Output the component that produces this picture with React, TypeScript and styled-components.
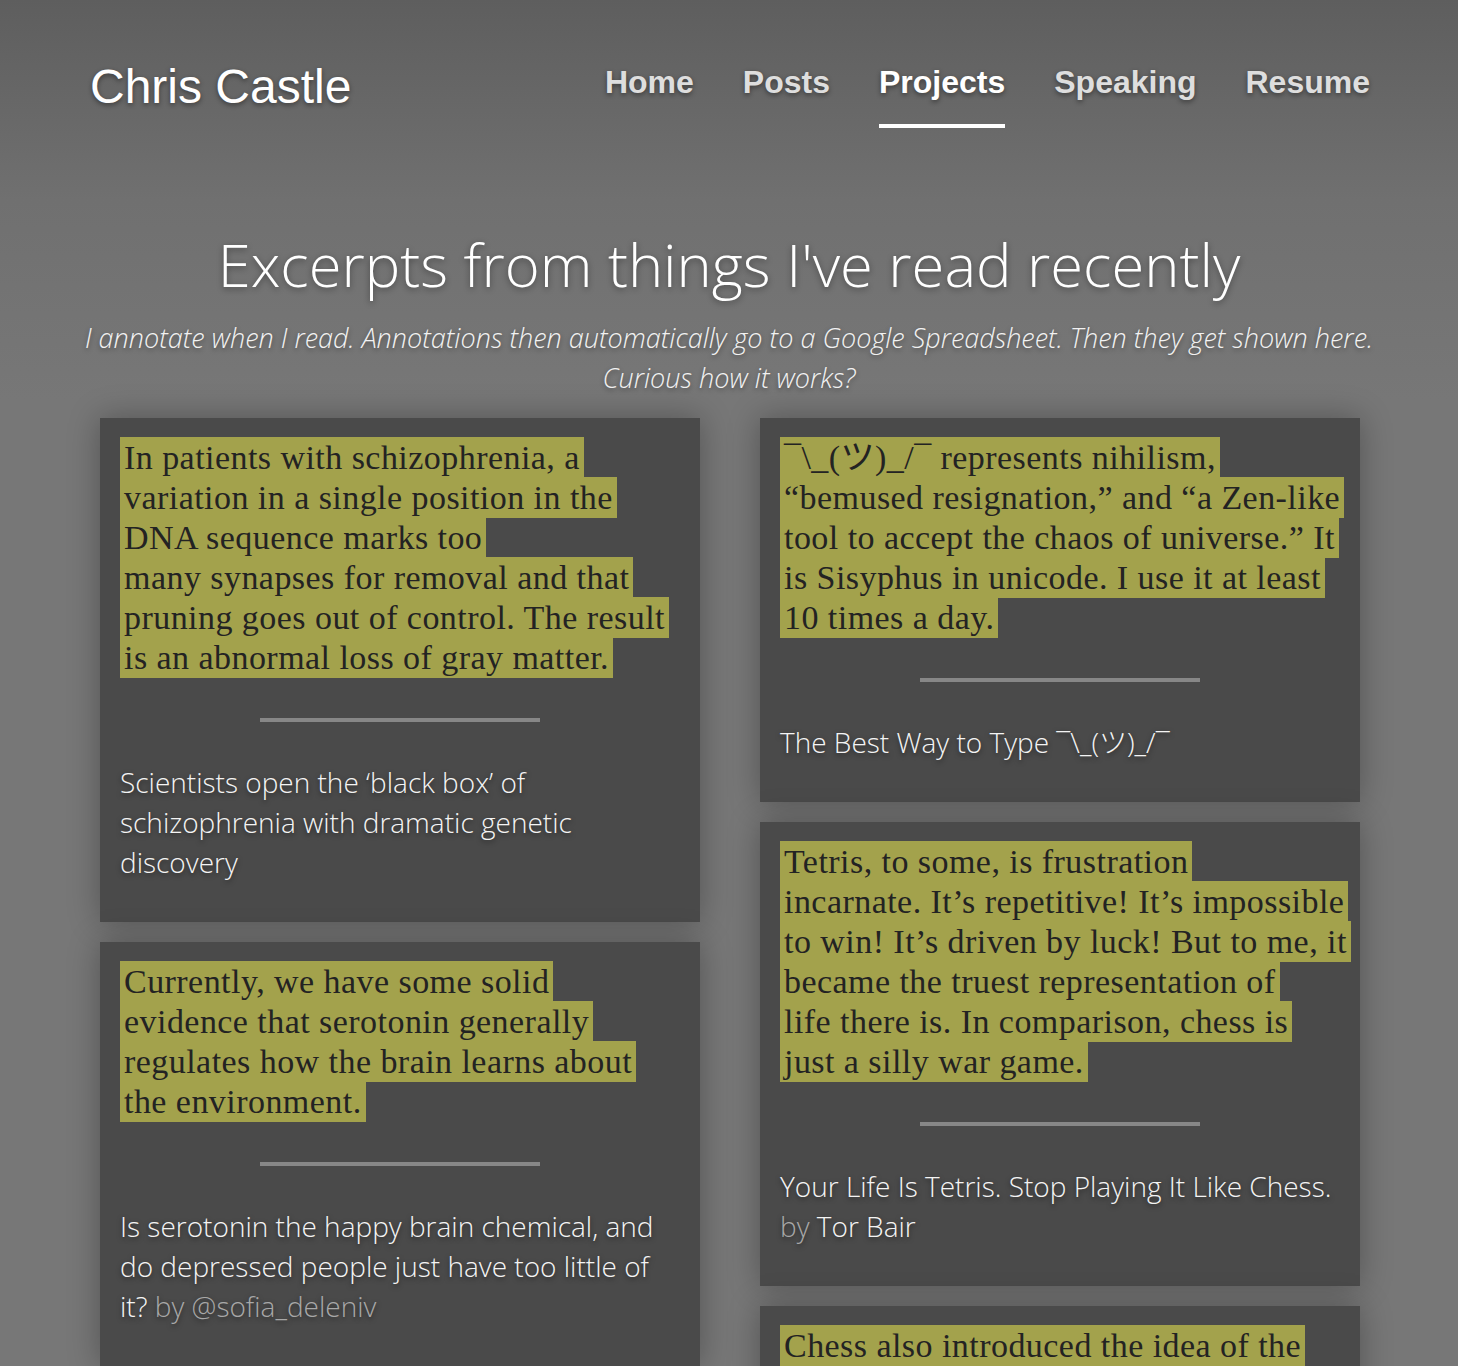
import React from "react";
import styled, { createGlobalStyle } from "styled-components";

const Global = createGlobalStyle`
  html, body { margin: 0; padding: 0; }
  body {
    min-height: 1366px;
    background: linear-gradient(to bottom, #5e5e5e 0px, #707070 200px, #777777 400px, #777777 100%);
    font-family: "Open Sans", "Liberation Sans", sans-serif;
    color: #fff;
  }
`;

const Page = styled.div`
  min-height: 1366px;
  overflow: hidden;
`;

const Header = styled.header`
  display: flex;
  justify-content: space-between;
  align-items: flex-start;
  padding: 63px 88px 0 90px;
`;

const Brand = styled.a`
  font-family: "Liberation Sans", Arial, sans-serif;
  font-size: 48px;
  line-height: 1;
  color: #fff;
  text-decoration: none;
  text-shadow: 0 2px 5px rgba(0, 0, 0, 0.45);
`;

const Nav = styled.nav`
  display: flex;
  gap: 49px;
  margin-top: 3px;
`;

const NavLink = styled.a<{ $active?: boolean }>`
  font-family: "Liberation Sans", Arial, sans-serif;
  font-weight: 700;
  font-size: 32px;
  line-height: 1;
  color: ${(p) => (p.$active ? "#ffffff" : "#dedede")};
  text-decoration: none;
  padding-bottom: 26px;
  border-bottom: 4px solid ${(p) => (p.$active ? "#ffffff" : "transparent")};
  text-shadow: 0 2px 5px rgba(0, 0, 0, 0.45);
`;

const Hero = styled.section`
  margin-top: 100px;
  text-align: center;
`;

const Title = styled.h1`
  margin: 0;
  font-family: "Open Sans", sans-serif;
  font-weight: 300;
  font-size: 59.7px;
  line-height: 72px;
  color: #fff;
  text-shadow: 0 2px 6px rgba(0, 0, 0, 0.4);
`;

const Subtitle = styled.p`
  margin: 18px 0 0;
  padding: 0 70px;
  font-family: "Open Sans", sans-serif;
  font-style: italic;
  font-weight: 300;
  font-size: 27px;
  line-height: 40px;
  color: #f2f2f2;
  text-shadow: 0 2px 5px rgba(0, 0, 0, 0.4);
`;

const Grid = styled.main`
  display: flex;
  gap: 60px;
  padding: 20px 0 0 100px;
  align-items: flex-start;
`;

const Column = styled.div`
  width: 600px;
  display: flex;
  flex-direction: column;
  gap: 20px;
`;

const Card = styled.article`
  background: #4a4a4a;
  padding: 20px 20px 40px;
  box-shadow: 0 0 30px rgba(0, 0, 0, 0.3);
`;

const Quote = styled.blockquote`
  margin: 0;
  font-family: "Liberation Serif", "Times New Roman", "Noto Sans CJK JP", serif;
  font-size: 34px;
  letter-spacing: 0.45px;
  line-height: 40px;
  white-space: nowrap;
  color: #232323;
`;

const Mark = styled.span`
  background: #a3a24c;
  padding: 2px 4px;
  -webkit-box-decoration-break: clone;
  box-decoration-break: clone;
`;

const Divider = styled.hr`
  width: 280px;
  height: 4px;
  margin: 40px auto 0;
  border: 0;
  background: #878787;
`;

const Source = styled.p`
  margin: 40px 0 0;
  font-family: "Open Sans", "Noto Sans CJK JP", sans-serif;
  font-weight: 300;
  font-size: 28px;
  line-height: 40px;
  color: #f4f4f4;
  text-shadow: 0 2px 5px rgba(0, 0, 0, 0.5);
`;

const By = styled.span`
  color: #a8a8a8;
`;

type Excerpt = {
  lines: string[];
  title: string;
  by?: string;
  byMuted?: boolean;
};

const left: Excerpt[] = [
  {
    lines: [
      "In patients with schizophrenia, a",
      "variation in a single position in the",
      "DNA sequence marks too",
      "many synapses for removal and that",
      "pruning goes out of control. The result",
      "is an abnormal loss of gray matter.",
    ],
    title: "Scientists open the \u2018black box\u2019 of schizophrenia with dramatic genetic discovery",
  },
  {
    lines: [
      "Currently, we have some solid",
      "evidence that serotonin generally",
      "regulates how the brain learns about",
      "the environment.",
    ],
    title: "Is serotonin the happy brain chemical, and do depressed people just have too little of it?",
    by: "@sofia_deleniv",
    byMuted: true,
  },
];

const right: Excerpt[] = [
  {
    lines: [
      "\u00AF\\_(\u30C4)_/\u00AF represents nihilism,",
      "\u201Cbemused resignation,\u201D and \u201Ca Zen-like",
      "tool to accept the chaos of universe.\u201D It",
      "is Sisyphus in unicode. I use it at least",
      "10 times a day.",
    ],
    title: "The Best Way to Type \u00AF\\_(\u30C4)_/\u00AF",
  },
  {
    lines: [
      "Tetris, to some, is frustration",
      "incarnate. It\u2019s repetitive! It\u2019s impossible",
      "to win! It\u2019s driven by luck! But to me, it",
      "became the truest representation of",
      "life there is. In comparison, chess is",
      "just a silly war game.",
    ],
    title: "Your Life Is Tetris. Stop Playing It Like Chess.",
    by: "Tor Bair",
  },
  {
    lines: [
      "Chess also introduced the idea of the",
      "\u201Cprodigy,\u201D a person born with talent",
      "that the rest of us can only envy.",
    ],
    title: "Your Life Is Tetris. Stop Playing It Like Chess.",
    by: "Tor Bair",
  },
];

function ExcerptCard({ e }: { e: Excerpt }) {
  return (
    <Card>
      <Quote>
        <Mark>
          {e.lines.map((l, i) => (
            <React.Fragment key={i}>
              {l}
              {i < e.lines.length - 1 && <br />}
            </React.Fragment>
          ))}
        </Mark>
      </Quote>
      <Divider />
      <Source>
        {e.title}
        {e.by && (
          <>
            {" "}
            <By>by</By>{" "}
            {e.byMuted ? <By>{e.by}</By> : e.by}
          </>
        )}
      </Source>
    </Card>
  );
}

export default function App() {
  return (
    <>
      <Global />
      <Page>
        <Header>
          <Brand href="#">Chris Castle</Brand>
          <Nav>
            <NavLink href="#">Home</NavLink>
            <NavLink href="#">Posts</NavLink>
            <NavLink href="#" $active>
              Projects
            </NavLink>
            <NavLink href="#">Speaking</NavLink>
            <NavLink href="#">Resume</NavLink>
          </Nav>
        </Header>
        <Hero>
          <Title>Excerpts from things I've read recently</Title>
          <Subtitle>
            I annotate when I read. Annotations then automatically go to a Google Spreadsheet. Then they get shown here.
            Curious how it works?
          </Subtitle>
        </Hero>
        <Grid>
          <Column>
            {left.map((e, i) => (
              <ExcerptCard key={i} e={e} />
            ))}
          </Column>
          <Column>
            {right.map((e, i) => (
              <ExcerptCard key={i} e={e} />
            ))}
          </Column>
        </Grid>
      </Page>
    </>
  );
}
